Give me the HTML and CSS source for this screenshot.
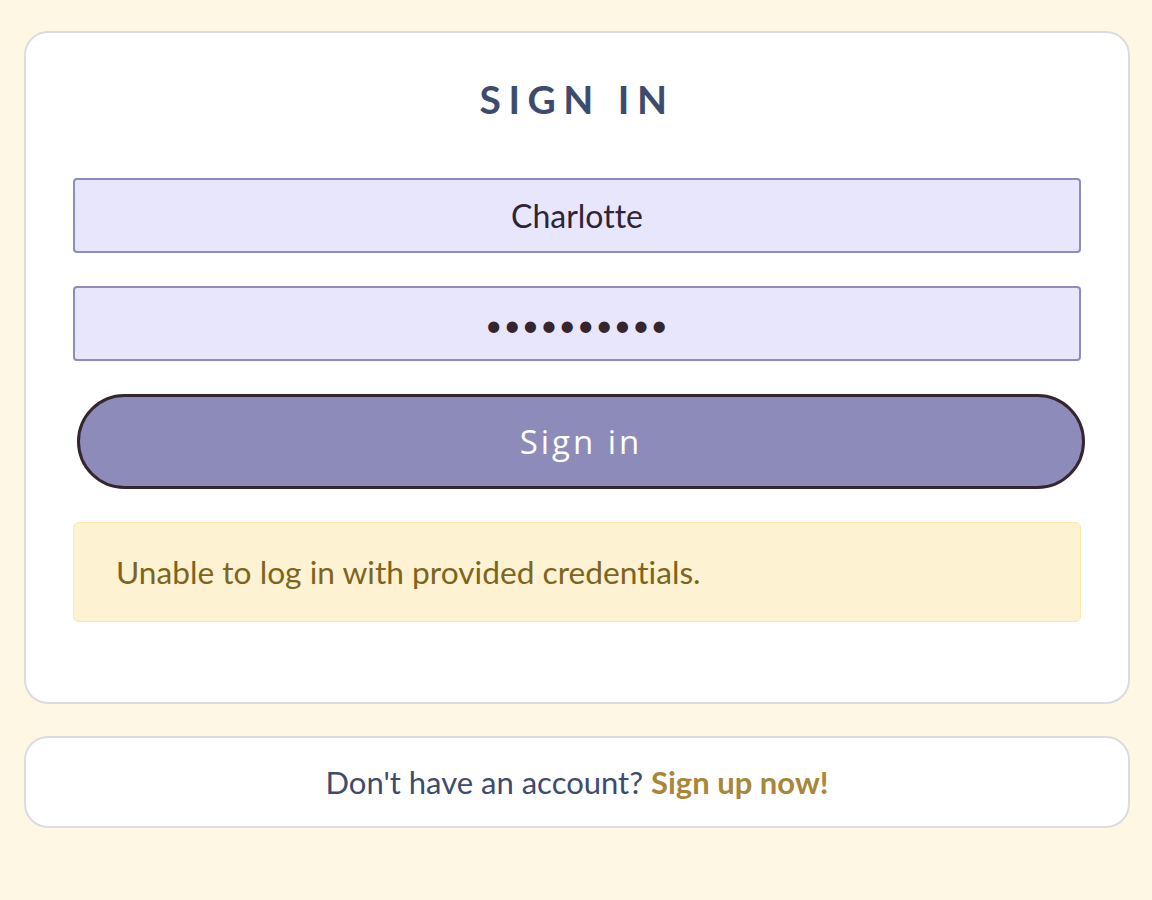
FILE: index.html
```html
<!DOCTYPE html>
<html lang="en">
<head>
<meta charset="utf-8">
<title>Sign in</title>
<link rel="stylesheet" href="styles.css">
</head>
<body>
<main class="page">
  <section class="card login-card">
    <h1 class="title">SIGN IN</h1>
    <form class="form">
      <input class="field" type="text" value="Charlotte">
      <input class="field password" type="password" value="abcdefghij">
      <button class="submit" type="button">Sign in</button>
      <div class="alert">Unable to log in with provided credentials.</div>
    </form>
  </section>
  <section class="card signup-card">
    <p class="signup-text">Don't have an account? <a class="signup-link" href="#">Sign up now!</a></p>
  </section>
</main>
</body>
</html>
```

FILE: styles.css
```css
html, body {
  margin: 0;
  padding: 0;
  background: #fdf7e4;
}
body {
  font-family: Lato, "Liberation Sans", sans-serif;
  font-variant-ligatures: none;
}
.page {
  padding: 31px 22px 0 24px;
  display: flex;
  flex-direction: column;
  gap: 32px;
}
.card {
  background: #ffffff;
  border: 2px solid #dcdbe0;
  border-radius: 24px;
}
.login-card {
  padding: 38px 47px 80px 47px;
}
.title {
  margin: 0 0 51px 0;
  text-align: center;
  font-family: Lato, sans-serif;
  font-weight: 700;
  font-size: 39px;
  line-height: 56px;
  letter-spacing: 7.5px;
  color: #3d4b6e;
}
.form {
  display: flex;
  flex-direction: column;
}
.field {
  box-sizing: border-box;
  height: 75px;
  width: 100%;
  margin: 0 0 33px 0;
  background: #e8e6fc;
  border: 2px solid #8e8bbd;
  border-radius: 4px;
  text-align: center;
  font-family: Lato, sans-serif;
  font-variant-ligatures: none;
  font-size: 32px;
  color: #2e2434;
  outline: none;
}
.password {
  font-size: 30px;
  letter-spacing: 1px;
  color: #35252f;
}
.submit {
  box-sizing: border-box;
  height: 95px;
  width: 100%;
  margin: 0 0 33px 4px;
  background: #8d8bb9;
  border: 3px solid #35252f;
  border-radius: 48px;
  color: #ffffff;
  font-family: "Open Sans", sans-serif;
  font-size: 33px;
  letter-spacing: 3px;
  cursor: pointer;
}
.alert {
  box-sizing: border-box;
  height: 100px;
  display: flex;
  align-items: center;
  padding: 0 42px;
  background: #fdf3d2;
  border: 1px solid #f9e8b0;
  border-radius: 6px;
  color: #7f6420;
  font-size: 31.7px;
}
.signup-card {
  height: 88px;
  display: flex;
  align-items: center;
  justify-content: center;
}
.signup-text {
  margin: 0;
  font-size: 31px;
  color: #3d4b6e;
}
.signup-link {
  color: #a8863a;
  font-weight: 700;
  text-decoration: none;
}
```
